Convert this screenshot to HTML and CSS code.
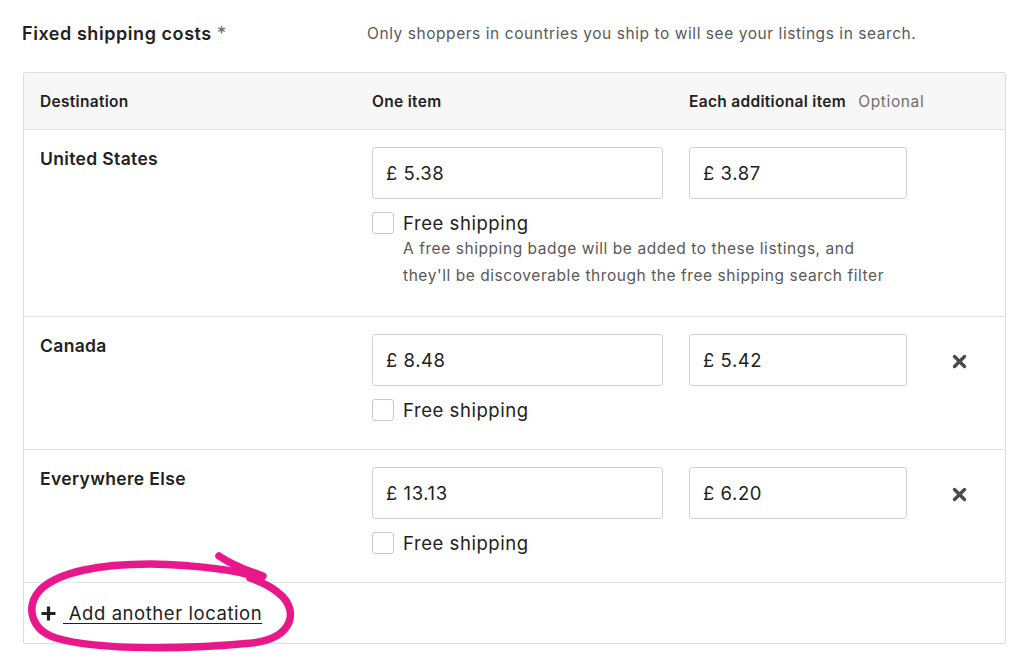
FILE: index.html
```html
<!DOCTYPE html>
<html lang="en">
<head>
  <meta charset="UTF-8">
  <title>Shipping costs</title>
  <link rel="stylesheet" href="styles.css">
</head>
<body>
  <div class="page">
    <div class="heading">
      <h2 class="title">Fixed shipping costs <span class="req">*</span></h2>
      <p class="hint">Only shoppers in countries you ship to will see your listings in search.</p>
    </div>

    <div class="costs">
      <div class="row head">
        <div>Destination</div>
        <div>One item</div>
        <div class="nowrap">Each additional item <span class="optional">Optional</span></div>
        <div></div>
      </div>

      <div class="row">
        <div class="dest">United States</div>
        <div class="first">
          <div class="money">£ 5.38</div>
          <label class="free"><span class="box"></span>Free shipping</label>
          <p class="note">A free shipping badge will be added to these listings, and they'll be discoverable through the free shipping search filter</p>
        </div>
        <div><div class="money">£ 3.87</div></div>
        <div></div>
      </div>

      <div class="row">
        <div class="dest">Canada</div>
        <div>
          <div class="money">£ 8.48</div>
          <label class="free"><span class="box"></span>Free shipping</label>
        </div>
        <div><div class="money">£ 5.42</div></div>
        <div class="del">
          <svg width="15" height="15" viewBox="0 0 15 15"><path d="M2.5 2.5 L12.5 12.5 M12.5 2.5 L2.5 12.5" stroke="#4a4a4a" stroke-width="3.4" stroke-linecap="round"/></svg>
        </div>
      </div>

      <div class="row">
        <div class="dest">Everywhere Else</div>
        <div>
          <div class="money">£ 13.13</div>
          <label class="free"><span class="box"></span>Free shipping</label>
        </div>
        <div><div class="money">£ 6.20</div></div>
        <div class="del">
          <svg width="15" height="15" viewBox="0 0 15 15"><path d="M2.5 2.5 L12.5 12.5 M12.5 2.5 L2.5 12.5" stroke="#4a4a4a" stroke-width="3.4" stroke-linecap="round"/></svg>
        </div>
      </div>

      <div class="add">
        <svg width="17" height="17" viewBox="0 0 17 17"><path d="M8.5 1.5 V15.5 M1.5 8.5 H15.5" stroke="#222" stroke-width="3.2"/></svg>
        <a href="#">&nbsp;Add another location</a>
      </div>
    </div>
  </div>

  <svg class="scribble" width="1024" height="665" viewBox="0 0 1024 665">
    <path d="M219 556 C232 565 248 571 263 576 M256 577 C240 571 200 565 150 564 C100 564 58 572 40 590 C25 607 31 630 56 638 C100 651 190 649 252 643 C293 638 298 612 282 596 C273 587 262 582 250 578" fill="none" stroke="#e8178a" stroke-width="7.5" stroke-linecap="round" stroke-linejoin="round"/>
  </svg>
</body>
</html>
```

FILE: styles.css
```css
* {
	box-sizing: border-box;
}

body {
	margin: 0;
	background: #fff;
	color: #222;
	font-family: "Inter", "Noto Sans", sans-serif;
	letter-spacing: 0.035em;
}

.page {
	padding: 16px 18px 0 22px;
	width: 1024px;
}

.heading {
	display: flex;
	align-items: center;
	height: 34px;
	margin-bottom: 22px;
}

.title {
	margin: 0;
	width: 345px;
	font-size: 18px;
	font-weight: 600;
}

.title .req {
	color: #666;
	font-weight: 400;
}

.hint {
	margin: 0;
	font-size: 15.5px;
	color: #595959;
}

.costs {
	margin-left: 1px;
	width: 983px;
	border: 1px solid #ddd;
	border-radius: 2px;
}

.row {
	display: grid;
	grid-template-columns: 332px 317px 218px 1fr;
	padding: 17px 16px 27px;
	border-bottom: 1px solid #e2e2e2;
}

.row.head {
	background: #f7f7f7;
	padding: 0 16px;
	height: 57px;
	align-items: center;
	font-size: 15.5px;
	font-weight: 600;
	letter-spacing: 0.02em;
}

.nowrap {
	white-space: nowrap;
}

.optional {
	margin-left: 8px;
	color: #707070;
	font-weight: 400;
	letter-spacing: 0.04em;
}

.dest {
	font-size: 17.5px;
	font-weight: 600;
	line-height: 24px;
	letter-spacing: 0.02em;
}

.money {
	width: 291px;
	height: 52px;
	border: 1px solid #d2d2d2;
	border-radius: 3px;
	padding-left: 13px;
	display: flex;
	align-items: center;
	font-size: 18.5px;
	background: #fff;
}

.row > div:nth-child(3) .money {
	width: 218px;
}

.free {
	display: flex;
	align-items: center;
	margin-top: 12px;
	height: 24px;
	font-size: 18.5px;
}

.box {
	width: 22px;
	height: 22px;
	border: 1px solid #c8c8c8;
	border-radius: 3px;
	margin-right: 9px;
	background: #fff;
}

.note {
	margin: 0 0 0 31px;
	width: 500px;
	font-size: 15.5px;
	line-height: 27px;
	color: #595959;
}

.del {
	padding-left: 45px;
	padding-top: 19px;
}

.add {
	height: 60px;
	display: flex;
	align-items: center;
	padding-left: 16px;
	font-size: 18.5px;
}

.add svg {
	margin-right: 6px;
}

.add a {
	color: #222;
	text-decoration: underline;
	text-underline-offset: 3px;
	text-decoration-thickness: 1px;
}

.scribble {
	position: absolute;
	top: 0;
	left: 0;
	pointer-events: none;
}
```
